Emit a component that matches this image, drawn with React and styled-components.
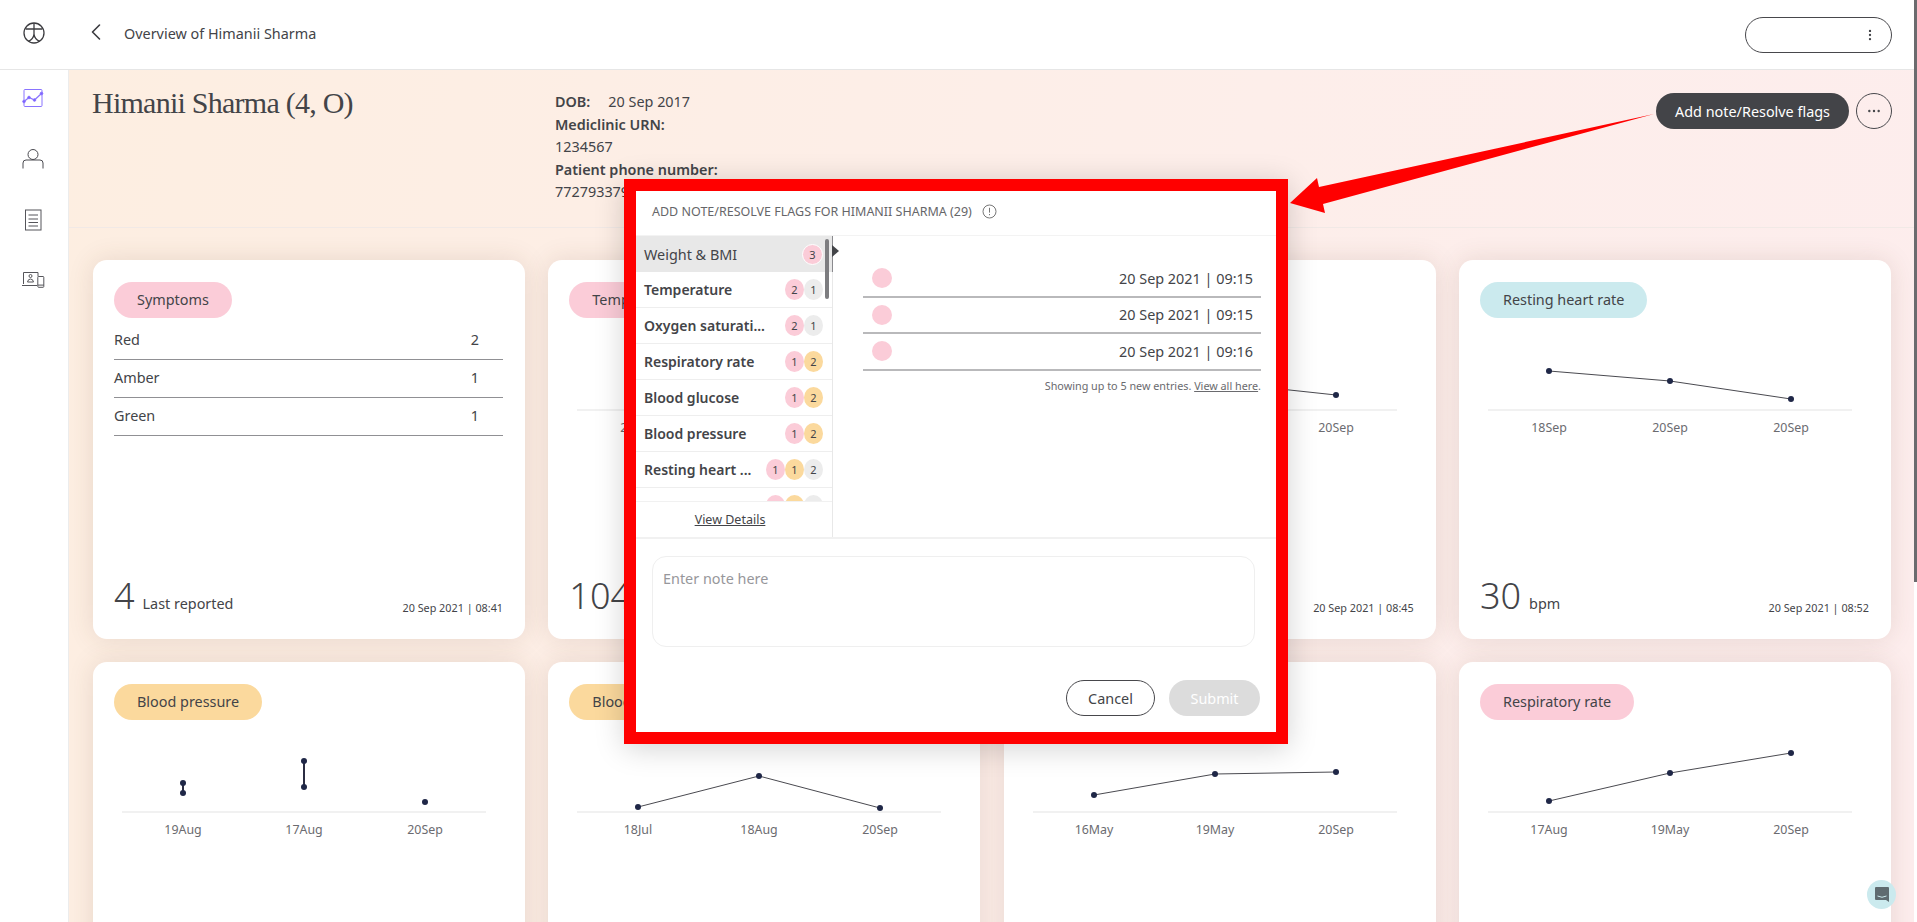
import React from "react";
import styled, { createGlobalStyle, css } from "styled-components";
import { ChevronLeft, MoreVertical, MoreHorizontal } from "lucide-react";

const PILL = { red: "#fbccd8", amber: "#fbd99d", grey: "#ececec", blue: "#cbeaee" };

const cards = [
  { title: "Symptoms", tone: "red", table: [["Red", 2], ["Amber", 1], ["Green", 1]], big: "4", unit: "Last reported", time: "08:41" },
  { title: "Temperature", tone: "red", labels: ["20Sep", "20Sep", "20Sep"], points: [[-30], [-22], [-14]], big: "104", unit: "°F", time: "08:43" },
  { title: "Oxygen saturation", tone: "red", labels: ["18Sep", "20Sep", "20Sep"], points: [[-36], [-28], [-15]], big: "92", unit: "%", time: "08:45" },
  { title: "Resting heart rate", tone: "blue", labels: ["18Sep", "20Sep", "20Sep"], points: [[-39], [-29], [-11]], big: "30", unit: "bpm", time: "08:52" },
  { title: "Blood pressure", tone: "amber", labels: ["19Aug", "17Aug", "20Sep"], points: [[-29, -19], [-51, -25], [-10]], ranged: true },
  { title: "Blood glucose", tone: "amber", labels: ["18Jul", "18Aug", "20Sep"], points: [[-5], [-36], [-4]] },
  { title: "Weight & BMI", tone: "red", labels: ["16May", "19May", "20Sep"], points: [[-17], [-38], [-40]] },
  { title: "Respiratory rate", tone: "red", labels: ["17Aug", "19May", "20Sep"], points: [[-11], [-39], [-59]] },
];

const flags = [
  { name: "Weight & BMI", counts: [["red", 3]], active: true },
  { name: "Temperature", counts: [["red", 2], ["grey", 1]] },
  { name: "Oxygen saturati...", counts: [["red", 2], ["grey", 1]] },
  { name: "Respiratory rate", counts: [["red", 1], ["amber", 2]] },
  { name: "Blood glucose", counts: [["red", 1], ["amber", 2]] },
  { name: "Blood pressure", counts: [["red", 1], ["amber", 2]] },
  { name: "Resting heart ...", counts: [["red", 1], ["amber", 1], ["grey", 2]] },
  { name: "Symptoms", counts: [["red", 1], ["amber", 1], ["grey", 1]] },
];

const entries = ["09:15", "09:15", "09:16"];

const Chart = ({ labels, points, ranged }) => {
  const xs = [90, 211, 332];
  const base = 92;
  return (
    <ChartSvg viewBox="0 0 432 130">
      <line x1="29" x2="393" y1={base} y2={base} stroke="#ececec" strokeWidth="1.5" />
      {!ranged && (
        <polyline
          points={points.map((p, i) => `${xs[i]},${base + p[0]}`).join(" ")}
          fill="none"
          stroke="#4a4a50"
          strokeWidth="1"
        />
      )}
      {points.map((p, i) => (
        <g key={i}>
          {p.length > 1 && (
            <line x1={xs[i]} x2={xs[i]} y1={base + p[0]} y2={base + p[1]} stroke="#2b2d42" strokeWidth="2" />
          )}
          {p.map((v) => (
            <circle key={v} cx={xs[i]} cy={base + v} r="3" fill="#1f2747" />
          ))}
        </g>
      ))}
      {labels.map((l, i) => (
        <ChartLabel key={i} x={xs[i]} y={base + 22} textAnchor="middle">
          {l}
        </ChartLabel>
      ))}
    </ChartSvg>
  );
};

const App = () => (
  <>
    <GlobalStyle />
    <Page>
      <Shell>
        <TopBar>
          <LogoCell>
            <svg width="22" height="22" viewBox="0 0 22 22" fill="none" stroke="#3c3c40" strokeWidth="1.3">
              <circle cx="11" cy="11" r="10" />
              <path d="M2.6 7 H19.4 M11 1 V12 M11 12 Q10.5 17 5.5 19.4 M11 12 Q11.5 17 16.5 19.4" />
            </svg>
          </LogoCell>
          <BackButton>
            <ChevronLeft size={28} strokeWidth={1.4} />
          </BackButton>
          <PageTitle>Overview of Himanii Sharma</PageTitle>
          <UserMenu>
            <MoreVertical size={14} strokeWidth={2} />
          </UserMenu>
        </TopBar>
        <Body>
          <SideNav>
            <NavIcon>
              <svg width="24" height="24" viewBox="0 0 24 24" fill="none" stroke="#8a74ff" strokeWidth="1">
                <rect x="3" y="3.5" width="18" height="17" rx="1" />
                <path d="M3 15.5 L8 11.5 L13.5 14 L20.5 7.5" strokeWidth="1.3" />
                <circle cx="3" cy="15.5" r="1.3" fill="#7b61ff" />
                <circle cx="8" cy="11.5" r="1.3" fill="#7b61ff" />
                <circle cx="13.5" cy="14" r="1.3" fill="#7b61ff" />
                <circle cx="20.5" cy="7.5" r="1.3" fill="#7b61ff" />
              </svg>
            </NavIcon>
            <NavIcon>
              <svg width="24" height="24" viewBox="0 0 24 24" fill="none" stroke="#4a4a50" strokeWidth="1">
                <circle cx="12" cy="7.5" r="5" />
                <path d="M2 21.5 V16 Q2 13 5 13 H19 Q22 13 22 16 V21.5" />
              </svg>
            </NavIcon>
            <NavIcon>
              <svg width="24" height="24" viewBox="0 0 24 24" fill="none" stroke="#55555a" strokeWidth="1">
                <rect x="4.5" y="2" width="15.5" height="20" />
                <path d="M7.5 7 H17 M7.5 11 H17 M7.5 14.5 H17 M7.5 18 H17" />
              </svg>
            </NavIcon>
            <NavIcon>
              <svg width="24" height="24" viewBox="0 0 24 24" fill="none" stroke="#55555a" strokeWidth="1">
                <path d="M2.5 15 V3.5 H17 V7.5" />
                <path d="M1 16.5 H16" />
                <circle cx="9.5" cy="7" r="1.5" />
                <path d="M6.5 13 Q7 10 9.5 10 Q12 10 12.5 13 Z" />
                <rect x="16.8" y="7.5" width="6" height="10.8" rx="0.8" />
                <path d="M16.8 16.1 H22.8" />
              </svg>
            </NavIcon>
          </SideNav>
          <Main>
            <PatientBand>
              <PatientName>Himanii Sharma (4, O)</PatientName>
              <PatientInfo>
                <InfoLine>
                  <b>DOB:</b>
                  <DobValue>20 Sep 2017</DobValue>
                </InfoLine>
                <InfoLine>
                  <b>Mediclinic URN:</b>
                </InfoLine>
                <InfoLine>1234567</InfoLine>
                <InfoLine>
                  <b>Patient phone number:</b>
                </InfoLine>
                <InfoLine>7727933790</InfoLine>
              </PatientInfo>
              <BandActions>
                <DarkButton>Add note/Resolve flags</DarkButton>
                <RoundButton>
                  <MoreHorizontal size={16} strokeWidth={1.6} />
                </RoundButton>
              </BandActions>
            </PatientBand>
            <CardGrid>
              {cards.map((c) => (
                <Card key={c.title}>
                  <Pill $tone={c.tone}>{c.title}</Pill>
                  {c.table ? (
                    <SymptomTable>
                      {c.table.map(([name, n]) => (
                        <SymptomRow key={name}>
                          <span>{name}</span>
                          <SymptomCount>{n}</SymptomCount>
                        </SymptomRow>
                      ))}
                    </SymptomTable>
                  ) : (
                    <Chart labels={c.labels} points={c.points} ranged={c.ranged} />
                  )}
                  {c.big && (
                    <CardFooter>
                      <ValueGroup>
                        <BigValue>{c.big}</BigValue>
                        <Unit>{c.unit}</Unit>
                      </ValueGroup>
                      <Stamp>20 Sep 2021 | {c.time}</Stamp>
                    </CardFooter>
                  )}
                </Card>
              ))}
            </CardGrid>
          </Main>
        </Body>
      </Shell>
      <ScrollTrack>
        <ScrollThumb />
      </ScrollTrack>
    </Page>

    <ModalFrame>
      <ModalHead>
        ADD NOTE/RESOLVE FLAGS FOR HIMANII SHARMA (29)
        <svg width="15" height="15" viewBox="0 0 15 15" fill="none" stroke="#666" strokeWidth="0.9">
          <circle cx="7.5" cy="7.5" r="6.5" />
          <path d="M7.5 3.8 V8.6 M7.5 10 V11.2" />
        </svg>
      </ModalHead>
      <ModalSplit>
        <FlagColumn>
          <FlagList>
            {flags.map((f) => (
              <FlagRow key={f.name} $active={f.active}>
                <FlagName $active={f.active}>{f.name}</FlagName>
                <Badges>
                  {f.counts.map(([tone, n], i) => (
                    <Badge key={i} $tone={tone} $ring={f.active}>
                      {n}
                    </Badge>
                  ))}
                </Badges>
              </FlagRow>
            ))}
            <ListThumb />
          </FlagList>
          <ViewDetails>View Details</ViewDetails>
          <Caret />
        </FlagColumn>
        <EntryColumn>
          {entries.map((t, i) => (
            <EntryRow key={i}>
              <EntryDot />
              <span>20 Sep 2021 | {t}</span>
            </EntryRow>
          ))}
          <EntryNote>
            Showing up to 5 new entries. <u>View all here</u>.
          </EntryNote>
        </EntryColumn>
      </ModalSplit>
      <NoteArea>
        <NoteInput placeholder="Enter note here" />
        <NoteActions>
          <OutlineButton>Cancel</OutlineButton>
          <SubmitButton>Submit</SubmitButton>
        </NoteActions>
      </NoteArea>
    </ModalFrame>

    <ArrowOverlay width="1917" height="922" viewBox="0 0 1917 922">
      <polygon points="1654,114 1319,187 1317,178 1290,203 1325,213 1323,204" fill="#ff0000" />
    </ArrowOverlay>

    <HelpFab>
      <svg width="14" height="15" viewBox="0 0 14 15">
        <path d="M1 0 H13 Q14 0 14 1 V15 L11 13 H1 Q0 13 0 12 V1 Q0 0 1 0 Z" fill="#5f6b70" />
        <path d="M2.5 9 Q7 11.5 11.5 9" stroke="#cbeaee" strokeWidth="1" fill="none" />
      </svg>
    </HelpFab>
  </>
);

const GlobalStyle = createGlobalStyle`
  html, body {
    margin: 0;
    height: 922px;
    overflow: hidden;
    background: #fff;
    font-family: "Noto Sans", "Liberation Sans", sans-serif;
    font-size: 14.4px;
    color: #434448;
  }
  * { box-sizing: border-box; }
`;
const Page = styled.div`
  display: flex;
  height: 922px;
  overflow: hidden;
`;
const Shell = styled.div`
  display: flex;
  flex-direction: column;
  flex: 1;
  min-width: 0;
`;
const TopBar = styled.header`
  display: flex;
  align-items: center;
  flex: 0 0 70px;
  padding-right: 22px;
  background: #fff;
  border-bottom: 1px solid #e6e6e6;
`;
const LogoCell = styled.div`
  display: flex;
  justify-content: center;
  width: 69px;
  margin-right: 13px;
  padding: 0 1px 3px 0;
`;
const BackButton = styled.div`
  display: flex;
  width: 28px;
  margin-right: 14px;
  margin-bottom: 5px;
  color: #3c3c40;
`;
const PageTitle = styled.div`
  flex: 1;
  margin-bottom: 3px;
`;
const UserMenu = styled.div`
  display: flex;
  align-items: center;
  justify-content: flex-end;
  width: 147px;
  height: 36px;
  padding-right: 14px;
  border: 1px solid #48484c;
  border-radius: 18px;
`;
const Body = styled.div`
  display: flex;
  flex: 1;
  min-height: 0;
`;
const SideNav = styled.nav`
  display: flex;
  flex-direction: column;
  align-items: center;
  gap: 37px;
  flex: 0 0 69px;
  padding-top: 16px;
  padding-right: 3px;
  background: #fff;
  border-right: 1px solid #ececec;
`;
const NavIcon = styled.div`
  display: flex;
  height: 24px;
`;
const Main = styled.main`
  flex: 1;
  min-width: 0;
  background: linear-gradient(100deg, #fdeee1 0%, #fdeeea 60%, #fdeded 100%);
`;
const PatientBand = styled.section`
  display: flex;
  align-items: flex-start;
  height: 158px;
  padding: 21px 22px 0 23px;
  border-bottom: 1px solid #f1e9e6;
`;
const PatientName = styled.h1`
  width: 463px;
  margin: 0;
  font-family: "Liberation Serif", serif;
  font-size: 30px;
  font-weight: 400;
  line-height: 24px;
  letter-spacing: -0.75px;
  color: #434448;
`;
const PatientInfo = styled.div`
  flex: 1;
  line-height: 22.5px;
  b { font-weight: 600; }
`;
const InfoLine = styled.div``;
const DobValue = styled.span`
  margin-left: 18px;
`;
const BandActions = styled.div`
  display: flex;
  gap: 7px;
  margin-top: 2px;
`;
const DarkButton = styled.button`
  height: 36px;
  width: 193px;
  padding: 0;
  border: 0;
  border-radius: 18px;
  background: #434448;
  color: #fff;
  font: 14.4px "Noto Sans", sans-serif;
`;
const RoundButton = styled.div`
  display: flex;
  align-items: center;
  justify-content: center;
  width: 36px;
  height: 36px;
  border: 1px solid #48484c;
  border-radius: 50%;
`;
const CardGrid = styled.section`
  display: grid;
  grid-template-columns: repeat(4, 432px);
  grid-auto-rows: 379px;
  column-gap: 23.33px;
  row-gap: 22.7px;
  padding: 32px 0 0 24px;
`;
const Card = styled.article`
  display: flex;
  flex-direction: column;
  padding: 22px 0 0;
  background: #fff;
  border-radius: 14px;
  box-shadow: 0 0 26px rgba(90, 60, 40, 0.13);
`;
const Pill = styled.div`
  align-self: flex-start;
  height: 36px;
  margin-left: 21px;
  padding: 0 23px;
  border-radius: 18px;
  line-height: 36px;
  background: ${({ $tone }) => PILL[$tone]};
`;
const ChartSvg = styled.svg`
  display: block;
  width: 432px;
  height: 130px;
`;
const ChartLabel = styled.text`
  font-family: "Noto Sans", sans-serif;
  font-size: 12.4px;
  fill: #6b6b70;
`;
const SymptomTable = styled.div`
  margin: 3.5px 22px 0 21px;
`;
const SymptomRow = styled.div`
  display: flex;
  justify-content: space-between;
  height: 38px;
  padding: 8px 24px 0 0;
  line-height: 20px;
  border-bottom: 1px solid #909094;
`;
const SymptomCount = styled.span``;
const CardFooter = styled.div`
  display: flex;
  align-items: flex-end;
  justify-content: space-between;
  margin-top: auto;
  padding: 0 22px 21px 21px;
`;
const ValueGroup = styled.div`
  display: flex;
  align-items: baseline;
`;
const BigValue = styled.span`
  font-size: 36px;
  font-weight: 300;
  line-height: 44px;
`;
const Unit = styled.span`
  margin-left: 8px;
`;
const Stamp = styled.span`
  margin-bottom: 3px;
  font-size: 10.8px;
`;
const ScrollTrack = styled.div`
  flex: 0 0 3px;
  background: #fff;
`;
const ScrollThumb = styled.div`
  height: 582px;
  background: #6b6b6e;
`;
const ModalFrame = styled.div`
  position: absolute;
  left: 624px;
  top: 179px;
  display: flex;
  flex-direction: column;
  width: 664px;
  height: 565px;
  border: 12px solid #ff0000;
  background: #fff;
  box-shadow: 0 4px 28px rgba(0, 0, 0, 0.18);
`;
const ModalHead = styled.div`
  display: flex;
  align-items: center;
  gap: 10px;
  flex: 0 0 45px;
  padding: 0 0 3px 16px;
  font-size: 12.5px;
  color: #666669;
  border-bottom: 1px solid #f3f3f3;
`;
const ModalSplit = styled.div`
  display: flex;
  flex: 0 0 303px;
  height: 303px;
  min-height: 0;
  border-bottom: 2px solid #f1f1f1;
`;
const FlagColumn = styled.div`
  position: relative;
  display: flex;
  flex-direction: column;
  flex: 0 0 197px;
  min-height: 0;
  border-right: 1px solid #e8e8e8;
  &::after {
    content: "";
    position: absolute;
    top: 0;
    right: -1px;
    width: 1px;
    height: 36px;
    background: #8a8a8e;
  }
`;
const FlagList = styled.div`
  position: relative;
  flex: 1;
  min-height: 0;
  overflow: hidden;
`;
const FlagRow = styled.div`
  display: flex;
  align-items: center;
  justify-content: space-between;
  height: 36px;
  padding: 0 9px 0 8px;
  border-bottom: 1px solid #eeeeee;
  ${({ $active }) =>
    $active &&
    css`
      background: #e8e8e8;
      border-bottom: 0;
    `}
`;
const FlagName = styled.span`
  font-size: ${({ $active }) => ($active ? "14.4px" : "14px")};
  font-weight: ${({ $active }) => ($active ? 400 : 600)};
  white-space: nowrap;
`;
const Badges = styled.div`
  display: flex;
`;
const Badge = styled.span`
  display: flex;
  align-items: center;
  justify-content: center;
  width: ${({ $ring }) => ($ring ? "21px" : "19px")};
  height: 21px;
  border-radius: 50%;
  font-size: 11px;
  background: ${({ $tone }) => PILL[$tone]};
  ${({ $ring }) => $ring && "border: 1px solid #fff;"}
`;
const ListThumb = styled.div`
  position: absolute;
  top: 3px;
  right: 3px;
  width: 4.5px;
  height: 60px;
  border-radius: 2px;
  background: #7d7d80;
`;
const ViewDetails = styled.div`
  flex: 0 0 35px;
  padding-right: 8px;
  font-size: 12.5px;
  line-height: 35px;
  text-align: center;
  text-decoration: underline;
  border-top: 1px solid #f1f1f1;
`;
const Caret = styled.div`
  position: absolute;
  top: 9px;
  left: 196px;
  z-index: 1;
  width: 0;
  height: 0;
  border-top: 6.5px solid transparent;
  border-bottom: 6.5px solid transparent;
  border-left: 7px solid #434448;
`;
const EntryColumn = styled.div`
  flex: 1;
  padding: 25px 15px 0 30px;
`;
const EntryRow = styled.div`
  display: flex;
  align-items: center;
  justify-content: space-between;
  height: 36.5px;
  padding: 0 8px 0 9px;
  border-bottom: 2px solid #b9b9bb;
`;
const EntryDot = styled.span`
  width: 20px;
  height: 20px;
  border-radius: 50%;
  background: #fbccd8;
`;
const EntryNote = styled.div`
  margin-top: 7px;
  font-size: 10.8px;
  text-align: right;
  color: #6a6a6e;
`;
const NoteArea = styled.div`
  flex: 1;
  padding: 17px 21px 0 16px;
`;
const NoteInput = styled.textarea`
  display: block;
  width: 603px;
  height: 91px;
  padding: 12px 10px;
  border: 1px solid #efefef;
  border-radius: 14px;
  resize: none;
  outline: none;
  font: 14.4px "Noto Sans", sans-serif;
  &::placeholder {
    color: #97979b;
  }
`;
const NoteActions = styled.div`
  display: flex;
  justify-content: flex-end;
  gap: 14px;
  margin-top: 33px;
  margin-right: -5px;
`;
const OutlineButton = styled.button`
  width: 89px;
  height: 36px;
  padding: 0;
  border: 1px solid #48484c;
  border-radius: 18px;
  background: #fff;
  color: #434448;
  font: 14.4px "Noto Sans", sans-serif;
`;
const SubmitButton = styled.button`
  width: 91px;
  height: 36px;
  padding: 0;
  border: 0;
  border-radius: 18px;
  background: #dcdcdc;
  color: #fff;
  font: 14.4px "Noto Sans", sans-serif;
`;
const ArrowOverlay = styled.svg`
  position: absolute;
  left: 0;
  top: 0;
  pointer-events: none;
`;
const HelpFab = styled.div`
  position: absolute;
  left: 1867px;
  top: 880px;
  display: flex;
  align-items: center;
  justify-content: center;
  width: 29px;
  height: 29px;
  border-radius: 50%;
  background: #cbeaee;
`;

export default App;
